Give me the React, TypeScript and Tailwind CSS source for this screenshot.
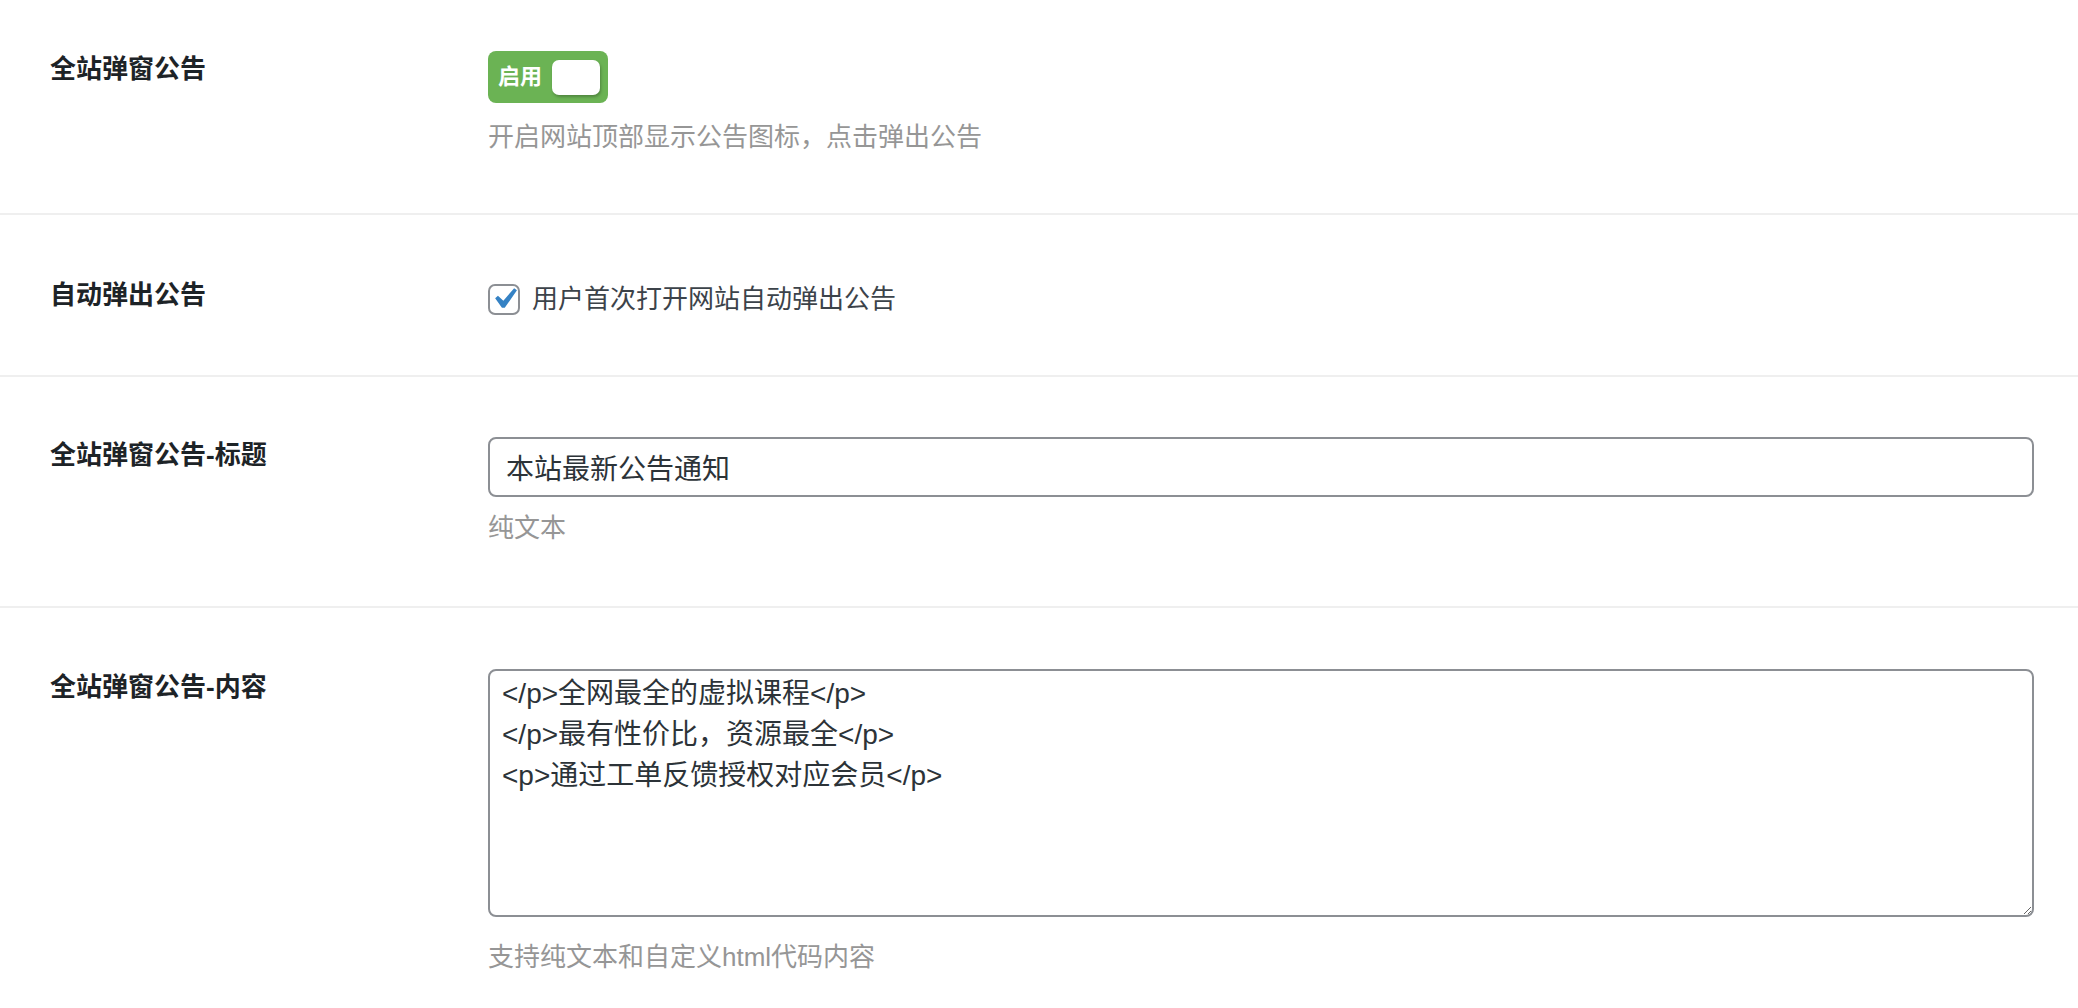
import { useState } from 'react'

const FONT = { fontFamily: '"Liberation Sans", "Noto Sans CJK SC", sans-serif' }

interface FieldRowProps {
  label: string
  className: string
  children: React.ReactNode
}

const FieldRow = ({ label, className, children }: FieldRowProps) => (
  <div className={`flex ${className}`}>
    <div className="w-[488px] shrink-0 pl-[50px] text-[26px] leading-[36px] font-semibold text-[#1d2327]">
      {label}
    </div>
    <div className="min-w-0 flex-1 pr-[44px]">{children}</div>
  </div>
)

const Hint = ({ children, className = '' }: { children: React.ReactNode; className?: string }) => (
  <p className={`text-[26px] leading-[36px] text-[#969696] ${className}`}>{children}</p>
)

const App = () => {
  const [enabled, setEnabled] = useState(true)
  const [autoPopup, setAutoPopup] = useState(true)
  const [title, setTitle] = useState('本站最新公告通知')
  const [content, setContent] = useState(
    '</p>全网最全的虚拟课程</p>\n</p>最有性价比，资源最全</p>\n<p>通过工单反馈授权对应会员</p>',
  )

  return (
    <div className="min-h-screen bg-white" style={FONT}>
      {/* Enable popup notice */}
      <FieldRow label="全站弹窗公告" className="pt-[51px] pb-[58px]">
        <button
          type="button"
          onClick={() => setEnabled(!enabled)}
          className="flex h-[52px] w-[120px] items-center justify-between rounded-[8px] bg-[#6bb354] pr-[8px] pl-[10px]"
        >
          <span className="text-[22px] leading-none font-bold text-white">启用</span>
          <span className="h-[35px] w-[48px] rounded-[7px] bg-white shadow-[1px_2px_3px_rgba(0,0,0,0.25)]" />
        </button>
        <Hint className="mt-[16px]">开启网站顶部显示公告图标，点击弹出公告</Hint>
      </FieldRow>

      {/* Auto popup */}
      <FieldRow label="自动弹出公告" className="border-t-2 border-[#efefef] pt-[62px] pb-[58px]">
        <label className="mt-[4px] flex h-[36px] cursor-pointer items-center gap-3">
          <span
            onClick={() => setAutoPopup(!autoPopup)}
            className="relative h-[31px] w-[32px] shrink-0 rounded-[7px] border-2 border-[#8c8f94] bg-white"
          >
            {autoPopup && (
              <svg
                viewBox="0 0 20 20"
                className="absolute top-1/2 left-1/2 h-[42px] w-[42px] -translate-x-1/2 -translate-y-1/2"
              >
                <path fill="#3582c4" d="M14.83 4.89l1.34.94-5.81 8.38H9.02L5.78 9.67l1.34-1.25 2.57 2.4z" />
              </svg>
            )}
          </span>
          <span className="text-[26px] leading-[36px] text-[#3c434a]">用户首次打开网站自动弹出公告</span>
        </label>
      </FieldRow>

      {/* Title */}
      <FieldRow label="全站弹窗公告-标题" className="border-t-2 border-[#efefef] pt-[60px] pb-[60px]">
        <input
          value={title}
          onChange={(e) => setTitle(e.target.value)}
          className="block h-[60px] w-full rounded-[8px] border-2 border-[#8c8f94] bg-white px-4 text-[28px] text-[#2c3338] outline-none"
          style={FONT}
        />
        <Hint className="mt-[13px]">纯文本</Hint>
      </FieldRow>

      {/* Content */}
      <FieldRow label="全站弹窗公告-内容" className="border-t-2 border-[#efefef] pt-[61px] pb-[40px]">
        <textarea
          value={content}
          onChange={(e) => setContent(e.target.value)}
          className="block h-[248px] w-full rounded-[8px] border-2 border-[#8c8f94] bg-white px-3 py-[2px] text-[28px] leading-[41px] text-[#2c3338] outline-none"
          style={FONT}
        />
        <Hint className="mt-[22px]">支持纯文本和自定义html代码内容</Hint>
      </FieldRow>
    </div>
  )
}

export default App
